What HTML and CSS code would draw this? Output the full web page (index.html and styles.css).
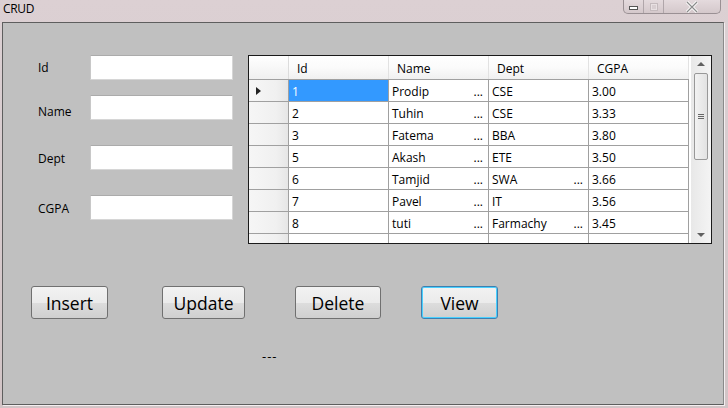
FILE: index.html
```html
<!DOCTYPE html>
<html>
<head>
<meta charset="utf-8">
<link rel="stylesheet" href="styles.css">
</head>
<body>
<div class="window">
  <div class="titlebar">
    <span class="title">CRUD</span>
    <div class="caption-btns">
      <div class="cbtn min"><span class="min-bar"></span></div>
      <div class="cbtn max"><span class="max-box"></span></div>
      <div class="cbtn close"><svg width="14" height="12" viewBox="0 0 14 12"><path d="M2 1 L12 11 M12 1 L2 11" stroke="#fff" stroke-width="3"/><path d="M2 1 L12 11 M12 1 L2 11" stroke="#8a8a8a" stroke-width="1.2"/></svg></div>
    </div>
  </div>
  <div class="client">
    <div class="top">
      <div class="form">
        <div class="frow r1"><label>Id</label><div class="input"></div></div>
        <div class="frow r2"><label>Name</label><div class="input"></div></div>
        <div class="frow r3"><label>Dept</label><div class="input"></div></div>
        <div class="frow r4"><label>CGPA</label><div class="input"></div></div>
      </div>
      <div class="grid">
        <div class="table">
          <div class="row head">
            <div class="rh"></div>
            <div class="c">Id</div><div class="c">Name</div><div class="c">Dept</div><div class="c">CGPA</div>
          </div>
          <div class="row">
            <div class="rh"><span class="arrow"></span></div>
            <div class="c sel">1</div><div class="c">Prodip<span class="ell">...</span></div><div class="c">CSE</div><div class="c">3.00</div>
          </div>
          <div class="row">
            <div class="rh"></div>
            <div class="c">2</div><div class="c">Tuhin<span class="ell">...</span></div><div class="c">CSE</div><div class="c">3.33</div>
          </div>
          <div class="row">
            <div class="rh"></div>
            <div class="c">3</div><div class="c">Fatema<span class="ell">...</span></div><div class="c">BBA</div><div class="c">3.80</div>
          </div>
          <div class="row">
            <div class="rh"></div>
            <div class="c">5</div><div class="c">Akash<span class="ell">...</span></div><div class="c">ETE</div><div class="c">3.50</div>
          </div>
          <div class="row">
            <div class="rh"></div>
            <div class="c">6</div><div class="c">Tamjid<span class="ell">...</span></div><div class="c">SWA<span class="ell">...</span></div><div class="c">3.66</div>
          </div>
          <div class="row">
            <div class="rh"></div>
            <div class="c">7</div><div class="c">Pavel<span class="ell">...</span></div><div class="c">IT</div><div class="c">3.56</div>
          </div>
          <div class="row">
            <div class="rh"></div>
            <div class="c">8</div><div class="c">tuti<span class="ell">...</span></div><div class="c">Farmachy<span class="ell">...</span></div><div class="c">3.45</div>
          </div>
          <div class="row">
            <div class="rh"></div>
            <div class="c"></div><div class="c"></div><div class="c"></div><div class="c"></div>
          </div>
        </div>
        <div class="scrollbar">
          <div class="sarrow up"></div>
          <div class="thumb"><span class="grip"></span></div>
          <div class="sarrow down"></div>
        </div>
      </div>
    </div>
    <div class="buttons">
      <div class="btn b-insert">Insert</div>
      <div class="btn b-update">Update</div>
      <div class="btn b-delete">Delete</div>
      <div class="btn b-view">View</div>
    </div>
    <div class="status">---</div>
  </div>
</div>
</body>
</html>
```
FILE: styles.css
```css
* { box-sizing: border-box; }
html, body { margin: 0; padding: 0; }
body {
  width: 728px;
  height: 408px;
  overflow: hidden;
  font-family: "Open Sans", "Noto Sans", sans-serif;
  background: #d6cacc;
}
.window {
  width: 728px;
  height: 408px;
  background: linear-gradient(180deg, #dcd0d3 0%, #d9cdd0 30%, #d2c4c6 100%);
  display: flex;
  flex-direction: column;
}
.titlebar {
  height: 22px;
  display: flex;
  justify-content: space-between;
  align-items: flex-start;
  padding-left: 3px;
}
.title {
  font-size: 12px;
  line-height: 17px;
  color: #000;
  letter-spacing: -0.3px;
}
.caption-btns {
  display: flex;
  margin-right: 7px;
  height: 14px;
  border: 1px solid #9a9094;
  border-top: none;
  border-radius: 0 0 5px 5px;
  background: linear-gradient(180deg, #e4dadd, #d4c8cb);
}
.cbtn {
  display: flex;
  align-items: center;
  justify-content: center;
  height: 13px;
}
.min { width: 20px; border-right: 1px solid #b0a6aa; }
.max { width: 20px; border-right: 1px solid #b0a6aa; }
.close { width: 56px; }
.min-bar {
  width: 9px; height: 4px;
  border: 1px solid #555;
  background: #fff;
  margin-top: 3px;
}
.max-box {
  width: 8px; height: 8px;
  border: 1px solid #c4babd;
  background: #d8ced1;
  box-shadow: inset 0 0 0 1px #e8e0e2;
}
.client {
  margin-left: 2px;
  width: 722px;
  height: 383px;
  background: #c0c0c0;
  border: 1px solid #5e5e5e;
  border-right-color: #8a8a8a;
  box-shadow: 1px 1px 0 #f4eef0;
  display: flex;
  flex-direction: column;
}
.top {
  display: flex;
  padding-top: 32px;
  height: 221px;
}
.form {
  width: 245px;
  padding-left: 35px;
  display: flex;
  flex-direction: column;
}
.frow {
  display: flex;
  align-items: flex-start;
}
.frow label {
  width: 52px;
  font-size: 12px;
  color: #000;
  line-height: 16px;
}
.r1 label { padding-top: 5px; }
.r2 label { padding-top: 9px; }
.r3 label { padding-top: 6px; }
.r4 label { padding-top: 6px; }
.r2 { margin-top: 15px; }
.r3 { margin-top: 25px; }
.r4 { margin-top: 25px; }
.input {
  width: 143px;
  height: 25px;
  background: #fff;
  border: 1px solid #d6d6d6;
  border-top-color: #ababab;
  border-left-color: #c8c8c8;
  border-radius: 1px;
}
.grid {
  width: 464px;
  height: 189px;
  border: 1px solid #1a1a1a;
  background: #fff;
  display: flex;
  overflow: hidden;
}
.table {
  width: 441px;
  display: flex;
  flex-direction: column;
}
.row {
  display: flex;
  height: 22px;
  flex-shrink: 0;
  border-bottom: 1px solid #a0a0a0;
}
.row.head {
  height: 24px;
  background: linear-gradient(180deg, #ffffff 0%, #fbfbfb 50%, #f0f0f0 100%);
  border-bottom: 1px solid #a0a0a0;
}
.rh {
  width: 40px;
  flex-shrink: 0;
  background: linear-gradient(90deg, #f6f6f6 0%, #f0f0f0 70%, #e6e6e6 100%);
  border-right: 1px solid #a0a0a0;
  display: flex;
  align-items: center;
  padding-left: 7px;
}
.row.head .rh { background: linear-gradient(180deg, #ffffff, #f0f0f0); border-right: 1px solid #dcdcdc; }
.arrow {
  width: 0; height: 0;
  border-top: 4px solid transparent;
  border-bottom: 4px solid transparent;
  border-left: 5px solid #222;
}
.c {
  width: 100px;
  flex-shrink: 0;
  border-right: 1px solid #a0a0a0;
  font-size: 12px;
  line-height: 21px;
  padding-left: 3px;
  padding-top: 1px;
  color: #000;
  position: relative;
  white-space: nowrap;
}
.row.head .c {
  border-right: 1px solid #e2e2e2;
  padding-left: 8px;
  padding-top: 3px;
  line-height: 20px;
}
.c.sel {
  background: #3399ff;
  color: #fff;
}
.ell {
  position: absolute;
  right: 5px;
  top: 1px;
}
.scrollbar {
  width: 21px;
  margin-left: 2px;
  background: linear-gradient(90deg, #e8e8e8, #f4f4f4);
  display: flex;
  flex-direction: column;
  align-items: center;
  position: relative;
}
.sarrow {
  width: 0; height: 0;
  border-left: 4px solid transparent;
  border-right: 4px solid transparent;
}
.sarrow.up { border-bottom: 4px solid #606060; margin-top: 6px; }
.sarrow.down { border-top: 4px solid #606060; position: absolute; bottom: 6px; }
.thumb {
  margin-top: 7px;
  width: 14px;
  height: 87px;
  border: 1px solid #989898;
  border-radius: 2px;
  background: linear-gradient(90deg, #f2f2f2, #e2e2e2);
  display: flex;
  align-items: center;
  justify-content: center;
}
.grip {
  width: 6px;
  height: 5px;
  border-top: 1px solid #666;
  border-bottom: 1px solid #666;
  position: relative;
}
.grip::after {
  content: "";
  position: absolute;
  left: 0; right: 0; top: 1px;
  border-top: 1px solid #666;
}
.buttons {
  display: flex;
  padding-left: 28px;
  padding-top: 42px;
}
.btn {
  height: 33px;
  border: 1px solid #707070;
  border-radius: 3px;
  background: linear-gradient(180deg, #f2f2f2 0%, #ebebeb 50%, #dddddd 51%, #cfcfcf 100%);
  font-size: 17.5px;
  line-height: 32px;
  text-align: center;
  color: #000;
}
.b-insert { width: 77px; }
.b-update { width: 83px; margin-left: 54px; }
.b-delete { width: 86px; margin-left: 50px; }
.b-view { width: 77px; margin-left: 40px; border-color: #3c7fb1; box-shadow: inset 0 0 0 1px #48d0ff; }
.status {
  padding-left: 259px;
  padding-top: 28px;
  font-size: 13px;
  letter-spacing: 1px;
  color: #000;
}
```
